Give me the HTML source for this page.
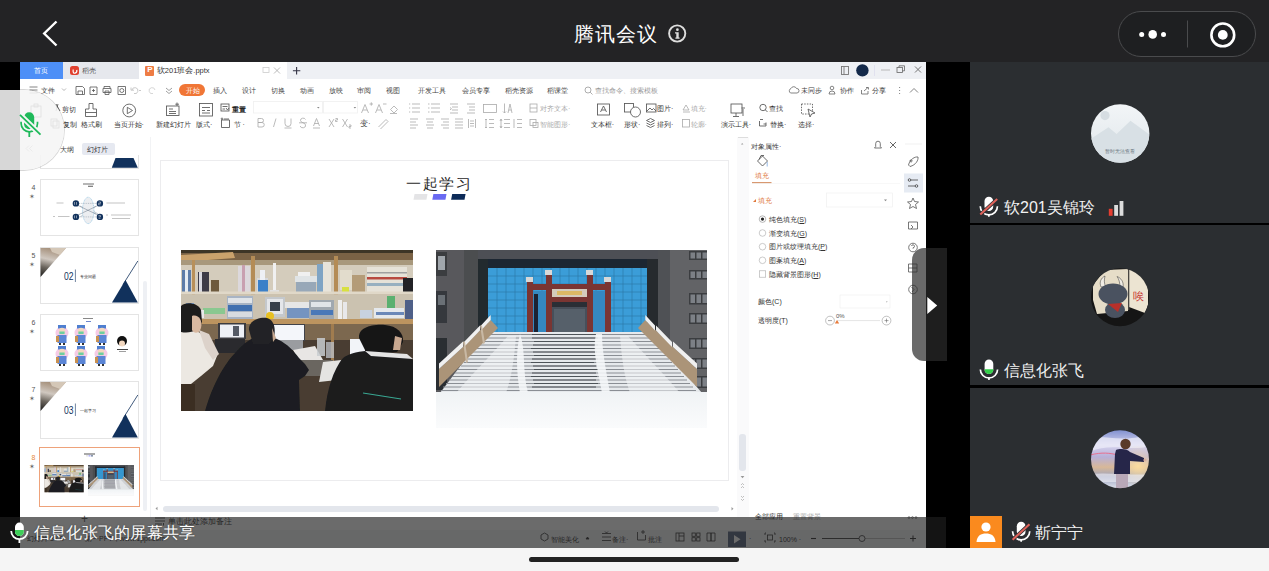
<!DOCTYPE html>
<html><head><meta charset="utf-8">
<style>
*{margin:0;padding:0;box-sizing:border-box}
html,body{width:1269px;height:571px;overflow:hidden;background:#f5f5f5;font-family:"Liberation Sans",sans-serif}
body{position:relative}
.a{position:absolute}
.t{position:absolute;white-space:nowrap;line-height:1}
svg{position:absolute;overflow:visible}
.tile{position:absolute;left:0;width:299px;background:#2b2e31}
</style></head><body>

<div class="a" style="left:0;top:0;width:1269px;height:62px;background:#232325"></div>
<svg style="left:0;top:0" width="1269" height="62">
  <polyline points="56.5,21.5 44.2,33.5 56.5,45.5" fill="none" stroke="#fff" stroke-width="2.4"/>
  <circle cx="677.2" cy="33.5" r="8.1" fill="none" stroke="#ddd" stroke-width="1.9"/>
  <circle cx="677.4" cy="29.7" r="1.35" fill="#ddd"/>
  <path d="M675,32.3 H678.7 V37.5 H679.6 V38.8 H675.4 V37.5 H676.3 V33.5 H675 Z" fill="#ddd"/>
  <rect x="1118.5" y="11.5" width="137" height="45" rx="22.5" fill="#1e1f21" stroke="#4a4b4d" stroke-width="1"/>
  <circle cx="1141.7" cy="34.4" r="2.5" fill="#fff"/>
  <circle cx="1152.7" cy="34.4" r="4.3" fill="#fff"/>
  <circle cx="1163.5" cy="34.4" r="2.5" fill="#fff"/>
  <line x1="1187.5" y1="20.5" x2="1187.5" y2="47.5" stroke="#4a4b4d" stroke-width="1"/>
  <circle cx="1222.8" cy="34.9" r="11.4" fill="none" stroke="#fff" stroke-width="2.6"/>
  <circle cx="1222.8" cy="34.9" r="4.9" fill="#fff"/>
</svg>
<div class="t" style="left:574px;top:24px;font-size:20px;color:#fff;letter-spacing:1.1px">腾讯会议</div>

<!-- ===== WPS window ===== -->
<div class="a" style="left:0;top:62px;width:20px;height:486px;background:#000"></div>
<div class="a" style="left:20px;top:62px;width:906px;height:486px;background:#fff"></div>
<div class="a" style="left:926px;top:62px;width:44px;height:486px;background:#000"></div>
<!-- tab bar -->
<div class="a" style="left:20px;top:62px;width:906px;height:17px;background:#eef0f4"></div>
<div class="a" style="left:20px;top:62px;width:43px;height:17px;background:#4d8ff7"></div>
<div class="t" style="left:33.8px;top:67.2px;font-size:7px;color:#fff">首页</div>
<div class="a" style="left:63px;top:62px;width:75.5px;height:17px;background:#e6e8ed"></div>
<div class="a" style="left:70.2px;top:66.2px;width:9px;height:9.3px;border-radius:2.5px;background:#e0402f"></div>
<svg style="left:70px;top:66px" width="10" height="10"><path d="M3.2,3.5 C2.8,6 3.5,7.5 5,7.2 C6.5,6.8 7,5 6.8,3.8" fill="none" stroke="#fff" stroke-width="1.2"/></svg>
<div class="t" style="left:81.5px;top:67.2px;font-size:7px;color:#555">稻壳</div>
<div class="a" style="left:138.5px;top:62px;width:148px;height:17px;background:#fff"></div>
<div class="a" style="left:145px;top:66px;width:9px;height:9.8px;border-radius:1px;background:#ee7c44"></div>
<div class="t" style="left:147.2px;top:66.3px;font-size:8px;color:#fff;font-weight:bold">P</div>
<div class="t" style="left:156.8px;top:67px;font-size:7.5px;color:#333">软201班会.pptx</div>
<svg style="left:262px;top:66px" width="30" height="10">
  <rect x="1" y="1.5" width="6" height="5" fill="none" stroke="#ccc" stroke-width="0.8"/>
  <path d="M12,1.5 L18,7.5 M18,1.5 L12,7.5" stroke="#aaa" stroke-width="0.8"/>
</svg>
<svg style="left:292px;top:66px" width="10" height="10"><path d="M4.6,1 V8.4 M0.9,4.7 H8.3" stroke="#334" stroke-width="1.1"/></svg>
<svg style="left:838px;top:64px" width="88" height="14">
  <rect x="3.5" y="2.5" width="7" height="8" fill="none" stroke="#777" stroke-width="0.9"/>
  <line x1="6" y1="2.5" x2="6" y2="10.5" stroke="#777" stroke-width="0.9"/>
  <circle cx="24.4" cy="6.4" r="6.2" fill="#13294a"/>
  <line x1="36.5" y1="1" x2="36.5" y2="12" stroke="#dde" stroke-width="0.8"/>
  <line x1="43" y1="6" x2="52" y2="6" stroke="#aaa" stroke-width="0.8"/>
  <rect x="59" y="3.5" width="5.5" height="5" fill="none" stroke="#666" stroke-width="0.8"/>
  <path d="M61,3.5 V1.8 H66.5 V6.8 H64.5" fill="none" stroke="#666" stroke-width="0.8"/>
  <path d="M77,2.5 L83,8.5 M83,2.5 L77,8.5" stroke="#666" stroke-width="0.9"/>
</svg>
<!-- menu row -->
<svg style="left:28px;top:85px" width="150" height="11">
  <path d="M1.5,2 H9.5 M1.5,5 H9.5 M1.5,8 H9.5" stroke="#666" stroke-width="0.8"/>
  <path d="M34,3.5 L36,5.5 L38,3.5" fill="none" stroke="#999" stroke-width="0.7"/>
  <path d="M48,1.5 H54.5 L56.5,3.5 V9.5 H48 Z M50,9.5 V6 H54.5 V9.5" fill="none" stroke="#555" stroke-width="0.8"/>
  <path d="M62,2 H69 V9.5 H62 Z M64,5.5 H67 M65.5,4 V7" fill="none" stroke="#555" stroke-width="0.8"/>
  <path d="M76,3 V1.5 H82 V3 M75,3.5 H83 V7.5 H75 Z M77,6 H81 V9.5 H77 Z" fill="none" stroke="#555" stroke-width="0.8"/>
  <path d="M90,1.5 H97.5 V9.5 H90 Z" fill="none" stroke="#555" stroke-width="0.8"/>
  <circle cx="93.8" cy="5.5" r="2" fill="none" stroke="#555" stroke-width="0.8"/>
  <path d="M104,5 A3,3 0 1 1 106,8.5" fill="none" stroke="#bbb" stroke-width="0.8"/>
  <path d="M103,2.5 V5.2 H106" fill="none" stroke="#bbb" stroke-width="0.8"/>
  <line x1="111" y1="5.5" x2="113" y2="5.5" stroke="#bbb" stroke-width="0.8"/>
  <path d="M127,5 A3,3 0 1 0 125,8.5" fill="none" stroke="#ccc" stroke-width="0.8"/>
  <path d="M138,3 L141,5.5 L144,3 M138,6 L141,8.5 L144,6" fill="none" stroke="#777" stroke-width="0.7"/>
</svg>
<div class="t" style="left:41px;top:87px;font-size:7px;color:#444">文件</div>
<div class="a" style="left:179px;top:84.2px;width:26px;height:11.8px;border-radius:6px;background:#f07636"></div>
<div class="t" style="left:185.8px;top:87px;font-size:7px;color:#fff">开始</div>
<div class="t" style="left:213.3px;top:87.3px;font-size:7px;color:#444">插入</div>
<div class="t" style="left:242px;top:87.3px;font-size:7px;color:#444">设计</div>
<div class="t" style="left:271px;top:87.3px;font-size:7px;color:#444">切换</div>
<div class="t" style="left:299.6px;top:87.3px;font-size:7px;color:#444">动画</div>
<div class="t" style="left:329px;top:87.3px;font-size:7px;color:#444">放映</div>
<div class="t" style="left:357px;top:87.3px;font-size:7px;color:#444">审阅</div>
<div class="t" style="left:386px;top:87.3px;font-size:7px;color:#444">视图</div>
<div class="t" style="left:418px;top:87.3px;font-size:7px;color:#444">开发工具</div>
<div class="t" style="left:461.7px;top:87.3px;font-size:7px;color:#444">会员专享</div>
<div class="t" style="left:504.5px;top:87.3px;font-size:7px;color:#444">稻壳资源</div>
<div class="t" style="left:547px;top:87.3px;font-size:7px;color:#444">稻课堂</div>
<svg style="left:584px;top:86px" width="10" height="10"><circle cx="4" cy="4" r="3" fill="none" stroke="#999" stroke-width="0.8"/><line x1="6.2" y1="6.2" x2="8.5" y2="8.5" stroke="#999" stroke-width="0.8"/></svg>
<div class="t" style="left:595px;top:87.3px;font-size:7px;color:#999">查找命令、搜索模板</div>
<svg style="left:788px;top:85px" width="135" height="11">
  <path d="M2.5,8 A2.5,2.5 0 0 1 3,3.5 A3,3 0 0 1 8.5,3.5 A2.2,2.2 0 0 1 9,8 Z" fill="none" stroke="#666" stroke-width="0.8"/>
  <circle cx="44" cy="3" r="1.8" fill="none" stroke="#666" stroke-width="0.8"/>
  <path d="M41,9 A3,3 0 0 1 47,9 Z" fill="none" stroke="#666" stroke-width="0.8"/>
  <path d="M73.5,5 V9 H80 V6 M76,6 L80,2.5 M78,2.5 H80.5 V4.5" fill="none" stroke="#666" stroke-width="0.8"/>
  <circle cx="111.6" cy="2.5" r="0.6" fill="#777"/><circle cx="111.6" cy="5.5" r="0.6" fill="#777"/><circle cx="111.6" cy="8.5" r="0.6" fill="#777"/>
  <path d="M122,7.5 L126,3.5 L130,7.5" fill="none" stroke="#666" stroke-width="0.8"/>
</svg>
<div class="t" style="left:801px;top:87.3px;font-size:7px;color:#444">未同步</div>
<div class="t" style="left:840px;top:87.3px;font-size:7px;color:#444">协作</div>
<div class="t" style="left:872px;top:87.3px;font-size:7px;color:#444">分享</div>
<!-- ribbon -->
<svg style="left:0;top:0" width="926" height="140">
 <g fill="none" stroke="#555" stroke-width="0.85">
  <!-- paste -->
  <rect x="31" y="106" width="10" height="11" />
  <rect x="34" y="104" width="4" height="3" />
  <!-- cut -->
  <path d="M56,104 L60,111 M58,104 L56,111"/>
  <!-- copy -->
  <rect x="51" y="119" width="6" height="7"/><rect x="53" y="121" width="6" height="7"/>
  <!-- brush -->
  <path d="M89,103.5 H93 V109 H96.5 V116.5 H85.5 V109 H89 Z M85.5,112.5 H96.5"/>
  <!-- play -->
  <circle cx="129.2" cy="110.5" r="6.4"/>
  <path d="M127.3,107.3 L132.5,110.5 L127.3,113.7 Z"/>
  <!-- new slide -->
  <rect x="166.5" y="106" width="12.5" height="9.5"/>
  <path d="M169,109 H173 M169,111.5 H176 M169,113.5 H176 M177,102.5 V106 M175.3,104.2 H179"/>
  <!-- layout -->
  <rect x="199.5" y="103.5" width="13" height="12.5"/>
  <path d="M202,107.5 H210 M202,110.5 H205 M207,110.5 H210 M202,113 H210"/>
  <!-- reset -->
  <rect x="221" y="104" width="8" height="7"/><path d="M222.5,106.5 H227.5 M222.5,109 H225 M226,108 l1.5,2 l1.5,-2"/>
  <!-- section -->
  <path d="M221.5,120 V127.5 H229.5 V120 Z M224,119 H229" /><circle cx="222" cy="118.8" r="0.8"/>
  <!-- font boxes -->
  <rect x="253.5" y="101.5" width="69" height="11.5" stroke="#f0f0f0"/>
  <rect x="323.5" y="101.5" width="34" height="11.5" stroke="#f0f0f0"/>
 </g>
 <g fill="#888">
  <path d="M317,107 h2.6 l-1.3,1.5z M353.6,107 h2.6 l-1.3,1.5z"/>
 </g>
 <g fill="none" stroke="#aaa" stroke-width="0.8">
  <!-- A+ A- eraser -->
  <path d="M361.5,113 L365,104.5 L368.5,113 M363,110 H367 M369.5,104 H373 M371.3,102.3 V105.7"/>
  <path d="M375.5,113 L379,104.5 L382.5,113 M377,110 H381 M383,104 H386.5"/>
  <path d="M390.5,109.5 L394,106 L397.5,109.5 L394,113 Z M390,113.5 H397"/>
  <!-- bold italic etc -->
  <path d="M258,118.5 H261.5 A2,2 0 0 1 261.5,122.5 H258 Z M258,122.5 H262 A2.2,2.2 0 0 1 262,127 H258 Z"/>
  <path d="M276,118.5 L273.5,127"/>
  <path d="M285,118.5 V123.5 A3,3 0 0 0 291,123.5 V118.5 M284.5,128 H291.5"/>
  <path d="M305.5,119.5 A2.6,2.2 0 0 0 300.5,120.5 C300.5,123 305.5,122.5 305.5,125 A2.6,2.2 0 0 1 300.2,126 M299,122.8 H307"/>
  <path d="M313.5,126 L316.5,118.5 L319.5,126 M314.5,123.5 H318.5 M313,128 H320"/>
  <path d="M329,119 L334,127 M334,119 L329,127 M335.5,118.5 h2 v1.5 h-2 v1.5 h2"/>
  <path d="M342.5,119 L347.5,127 M347.5,119 L342.5,127 M349,125 h2 v1.5 h-2 v1.5 h2"/>
  <path d="M378.5,127 L386,119.5 L388,121.5 L380.5,129"/>
  <!-- lists -->
  <path d="M409,104 h1.2 M409,108 h1.2 M409,112 h1.2 M412,104 H420 M412,108 H420 M412,112 H420"/>
  <path d="M428,104 h1.5 M428,108 h1.5 M428,112 h1.5 M431,104 H440 M431,108 H440 M431,112 H440"/>
  <path d="M450,104 H458 M452,107 H458 M452,110 H458 M450,113 H458 M450,107.5 l1.5,1.2 l-1.5,1.2"/>
  <path d="M467,104 H475 M469,107 H475 M469,110 H475 M467,113 H475"/>
  <rect x="483.5" y="104.5" width="13" height="8"/>
  <path d="M504.5,103.5 V113 M503,111.5 L504.5,113 L506,111.5 M508,113 L510,104 L512,113 M508.7,110 H511.3"/>
  <!-- align -->
  <path d="M410,119 H418 M410,122 H416 M410,125 H418 M410,128 H416"/>
  <path d="M426,119 H434 M427,122 H433 M426,125 H434 M427,128 H433"/>
  <path d="M441,119 H449 M443,122 H449 M441,125 H449 M443,128 H449"/>
  <path d="M455,119 H463 M455,122 H463 M455,125 H463 M455,128 H463"/>
  <path d="M468.5,119 V128 M475.5,119 V128 M470,121 H474 M470,123.5 H474 M470,126 H474"/>
  <path d="M486,119 V128 M485,120 L486,119 L487,120 M485,127 L486,128 L487,127 M489,119.5 H494 M489,123.5 H494 M489,127.5 H494"/>
  <path d="M501,119 V128 M500,121 L501,119 L502,121 M500,126 L501,128 L502,126 M504,119.5 H510 M504,123.5 H510 M504,127.5 H510"/>
  <path d="M514,119 V128 M517,119.5 H522 M517,123.5 H522 M517,127.5 H522"/>
  <rect x="530" y="104" width="7" height="8"/><path d="M530,108 H537"/>
  <rect x="530" y="119.5" width="6" height="6"/><rect x="533" y="122.5" width="5" height="5"/>
  <!-- fill / outline -->
  <path d="M683,110 L686,105 L689,110 Z M683,112 H690"/>
  <rect x="682.5" y="119.5" width="7" height="7.5"/>
 </g>
 <g fill="none" stroke="#555" stroke-width="0.85">
  <!-- textbox -->
  <rect x="597.5" y="104" width="12" height="11"/>
  <path d="M600.5,112 L603.5,106 L606.5,112 M601.5,110 H605.5"/>
  <!-- shapes -->
  <rect x="624.5" y="103.5" width="9" height="8.5"/><circle cx="635.5" cy="112" r="5" fill="#fff"/>
  <!-- picture -->
  <rect x="646.5" y="104" width="9.5" height="8"/><path d="M647,111 L650,108 L652,110 L653.5,108.5 L656,111"/>
  <!-- arrange -->
  <path d="M646.5,120.5 L650.5,118.5 L654.5,120.5 L650.5,122.5 Z M646.5,123 L650.5,125 L654.5,123 M646.5,125.5 L650.5,127.5 L654.5,125.5"/>
  <!-- presenter tools -->
  <rect x="731" y="104" width="11" height="9"/><path d="M736,113 V116 M733,116.5 H739 M743,109 V116 M741.5,108 H745"/>
  <!-- find -->
  <circle cx="763" cy="107.5" r="3.2"/><path d="M765.3,109.8 L767.5,112"/>
  <!-- replace -->
  <path d="M760,119.5 H763 M759.5,121 V126 H766 V122.5 M763.5,124 h2.5"/>
  <!-- select -->
  <rect x="801.5" y="104" width="11" height="10" stroke-dasharray="1.5,1.2"/>
  <path d="M808,109 L815,113 L811.5,114 L810,117 Z" fill="#fff"/>
 </g>
</svg>
<div class="t" style="left:61.8px;top:106px;font-size:7px;color:#333">剪切</div>
<div class="t" style="left:63px;top:120.6px;font-size:7px;color:#333">复制</div>
<div class="t" style="left:81px;top:120.6px;font-size:7px;color:#333">格式刷</div>
<div class="t" style="left:113.5px;top:120.6px;font-size:7px;color:#333">当页开始·</div>
<div class="t" style="left:156px;top:120.6px;font-size:7px;color:#333">新建幻灯片</div>
<div class="t" style="left:196px;top:120.6px;font-size:7px;color:#333">版式·</div>
<div class="t" style="left:232px;top:105.5px;font-size:7px;color:#222;font-weight:bold">重置</div>
<div class="t" style="left:233.5px;top:120.6px;font-size:7px;color:#333">节 ·</div>
<div class="t" style="left:360px;top:120.2px;font-size:8px;color:#444">变·</div>
<div class="t" style="left:540px;top:105.3px;font-size:7px;color:#aaa">对齐文本·</div>
<div class="t" style="left:540px;top:120.6px;font-size:7px;color:#aaa">智能图形·</div>
<div class="t" style="left:590.7px;top:120.6px;font-size:7px;color:#333">文本框·</div>
<div class="t" style="left:624px;top:120.6px;font-size:7px;color:#333">形状·</div>
<div class="t" style="left:657px;top:105.3px;font-size:7px;color:#333">图片·</div>
<div class="t" style="left:657px;top:120.6px;font-size:7px;color:#333">排列·</div>
<div class="t" style="left:690.5px;top:105.3px;font-size:7px;color:#aaa">填充·</div>
<div class="t" style="left:690.5px;top:120.6px;font-size:7px;color:#aaa">轮廓·</div>
<div class="t" style="left:720.7px;top:120.6px;font-size:7px;color:#333">演示工具·</div>
<div class="t" style="left:769px;top:105.3px;font-size:7px;color:#333">查找</div>
<div class="t" style="left:770px;top:120.6px;font-size:7px;color:#333">替换·</div>
<div class="t" style="left:798px;top:120.6px;font-size:7px;color:#333">选择·</div>

<!-- ===== slide panel ===== -->
<div class="a" style="left:150px;top:137px;width:1px;height:380px;background:#f2f3f5"></div>
<div class="a" style="left:143.2px;top:281px;width:3.6px;height:230px;background:#eef0f4;border-radius:2px"></div>
<svg style="left:24px;top:144px" width="10" height="9"><path d="M5,1.5 L2,4.5 L5,7.5 M8.5,1.5 L5.5,4.5 L8.5,7.5" fill="none" stroke="#888" stroke-width="0.8"/></svg>
<div class="t" style="left:60.4px;top:145.9px;font-size:7px;color:#444">大纲</div>
<div class="a" style="left:81.8px;top:143px;width:32.8px;height:11.7px;border-radius:2px;background:#e6e9f1"></div>
<div class="t" style="left:87.3px;top:145.9px;font-size:7px;color:#333">幻灯片</div>
<!-- thumb 3 (clipped) -->
<div class="a" style="left:39.5px;top:155px;width:99px;height:13.5px;background:#fff;border:1px solid #e4e4e4;border-top:none"></div>
<svg style="left:0;top:0" width="150" height="520">
  <path d="M115.5,158 H133.5 L137.8,167.8 H111.8 Z" fill="#11315c"/>
</svg>
<!-- thumb 4 -->
<div class="a" style="left:39.5px;top:179px;width:99px;height:57px;background:#fff;border:1px solid #e4e4e4"></div>
<div class="t" style="left:31.5px;top:183.5px;font-size:7px;color:#555">4</div>
<div class="t" style="left:28.5px;top:193px;font-size:7px;color:#666">✶</div>
<svg style="left:0;top:0" width="150" height="520">
  <rect x="83" y="183.3" width="11" height="1.4" fill="#999"/>
  <rect x="88" y="185.8" width="5" height="0.8" fill="#333"/>
  <path d="M80,206 L96,214 M84,205 L98,214 M80,217 L96,206" stroke="#7a8a9a" stroke-width="0.45"/>
  <ellipse cx="88.2" cy="210.4" rx="5.75" ry="13.2" fill="#eceef1" stroke="#6ab0d8" stroke-width="0.5" stroke-dasharray="1,0.6"/>
  <path d="M79,203.4 H97 M79,216.9 H97" stroke="#6a7a8a" stroke-width="0.4" stroke-dasharray="1,0.8"/>
  <path d="M77,205 L99,215.5 M99,205 L77,215.5" stroke="#5a6a7a" stroke-width="0.45"/>
  <circle cx="75.9" cy="203.4" r="3.2" fill="#11315c"/><circle cx="99.9" cy="203.4" r="3.2" fill="#11315c"/>
  <circle cx="75.9" cy="216.9" r="3.2" fill="#11315c"/><circle cx="99.9" cy="216.9" r="3.2" fill="#11315c"/>
  <path d="M74.5,202 v2.8 M76.5,202 v2.8 M98.5,202 h2 v1.4 h-2 v1.4 h2 M74.5,215.5 v2.8 M76.5,215.5 v2.8 M98.5,215.5 h2 v1.4 h-2 M98.5,218.3 h2" stroke="#fff" stroke-width="0.45" fill="none"/>
  <path d="M56.5,203 H63.5 M53,216.5 H55 M58,216.5 H69.5 M106.4,203 H125 M106,215 H108 M111,215 H131 M112,218.5 H130" stroke="#aaa" stroke-width="0.7"/>
</svg>
<!-- thumb 5 -->
<div class="a" style="left:39.5px;top:247px;width:99px;height:56.5px;background:#fff;border:1px solid #e4e4e4"></div>
<div class="t" style="left:31.5px;top:251.5px;font-size:7px;color:#555">5</div>
<div class="t" style="left:28.5px;top:261px;font-size:7px;color:#666">✶</div>
<svg style="left:0;top:0" width="150" height="520">
  <defs>
    <linearGradient id="tg1" x1="0.2" y1="0" x2="0" y2="1"><stop offset="0" stop-color="#a89480"/><stop offset="0.35" stop-color="#d0c8c0"/><stop offset="0.65" stop-color="#6a645c"/><stop offset="1" stop-color="#1c1c1c"/></linearGradient>
  </defs>
  <path d="M40.5,248 H66 L40.5,277 Z" fill="url(#tg1)"/>
  <path d="M50,248 H66 L60,255 L52,252 Z" fill="#d8ccbc" opacity="0.9"/>
  <text x="64" y="280.3" font-size="10.5" fill="#11315c" font-family="Liberation Sans" textLength="9.5" lengthAdjust="spacingAndGlyphs">02</text>
  <line x1="75.4" y1="269.5" x2="75.4" y2="282" stroke="#11315c" stroke-width="0.6"/>
  <text x="79.5" y="277.5" font-size="3.8" fill="#222">专业问题</text>
  <path d="M112,302.5 L125.5,280 L137.8,302.5 Z" fill="#11315c"/>
  <line x1="123" y1="284.5" x2="137.8" y2="261" stroke="#11315c" stroke-width="0.8"/>
</svg>
<!-- thumb 6 -->
<div class="a" style="left:39.5px;top:314px;width:99px;height:56.5px;background:#fff;border:1px solid #e4e4e4"></div>
<div class="t" style="left:31.5px;top:318.5px;font-size:7px;color:#555">6</div>
<div class="t" style="left:28.5px;top:328px;font-size:7px;color:#666">✶</div>
<svg style="left:0;top:0" width="150" height="520">
  <rect x="83" y="318" width="10" height="1" fill="#888"/>
  <rect x="86" y="321" width="5" height="0.8" fill="#4a68c0"/>
  <defs><g id="cf">
    <circle cx="0" cy="1" r="6.5" fill="#f6cbe6"/>
    <rect x="-4" y="-7" width="8" height="3.5" fill="#4f7fd0"/>
    <circle cx="0" cy="-1" r="3.2" fill="#f3d8c0"/>
    <rect x="-2.6" y="-0.5" width="5.2" height="2.6" fill="#6ecfa0"/>
    <rect x="-4.5" y="3" width="9" height="8" fill="#5c86d6"/>
    <rect x="-6" y="4" width="3" height="6" fill="#c89050"/>
    <rect x="-3" y="11" width="2" height="2" fill="#333"/><rect x="1" y="11" width="2" height="2" fill="#333"/>
  </g></defs>
  <use href="#cf" x="62" y="332"/><use href="#cf" x="81" y="332"/><use href="#cf" x="102" y="332"/>
  <use href="#cf" x="62" y="353"/><use href="#cf" x="81" y="353"/><use href="#cf" x="101" y="353"/>
  <circle cx="122" cy="341" r="5" fill="#111"/><circle cx="122" cy="343.5" r="3" fill="#f3d8c0"/>
  <rect x="117" y="349" width="11" height="1" fill="#444"/><rect x="119" y="351" width="7" height="0.8" fill="#888"/>
</svg>
<!-- thumb 7 -->
<div class="a" style="left:39.5px;top:381px;width:99px;height:57.5px;background:#fff;border:1px solid #e4e4e4"></div>
<div class="t" style="left:31.5px;top:385.5px;font-size:7px;color:#555">7</div>
<div class="t" style="left:28.5px;top:395px;font-size:7px;color:#666">✶</div>
<svg style="left:0;top:0" width="150" height="520">
  <path d="M40.5,382 H66 L40.5,411 Z" fill="url(#tg1)"/>
  <path d="M50,382 H66 L60,389 L52,386 Z" fill="#d8ccbc" opacity="0.9"/>
  <text x="64" y="414.3" font-size="10.5" fill="#11315c" font-family="Liberation Sans" textLength="9.5" lengthAdjust="spacingAndGlyphs">03</text>
  <line x1="75.4" y1="403.5" x2="75.4" y2="416" stroke="#11315c" stroke-width="0.6"/>
  <text x="79.5" y="411.5" font-size="3.8" fill="#222">一起学习</text>
  <path d="M112,437.5 L125.5,414 L137.8,437.5 Z" fill="#11315c"/>
  <line x1="123" y1="418.5" x2="137.8" y2="395" stroke="#11315c" stroke-width="0.8"/>
</svg>
<!-- thumb 8 selected -->
<div class="a" style="left:38.5px;top:447px;width:101.5px;height:60px;background:#fff;border:1.6px solid #eea27a"></div>
<div class="t" style="left:31.5px;top:453.5px;font-size:7px;color:#e58a3e">8</div>
<div class="t" style="left:28.5px;top:463px;font-size:7px;color:#666">✶</div>
<svg style="left:0;top:0" width="150" height="520">
  <rect x="84" y="453.5" width="11" height="1" fill="#555"/>
  <rect x="86" y="455.5" width="2" height="0.8" fill="#ccc"/><rect x="88.5" y="455.5" width="2" height="0.8" fill="#6b6bf5"/><rect x="91" y="455.5" width="2" height="0.8" fill="#11315c"/>
  <g transform="translate(44.3,465) scale(0.1703)"><use href="#p1g"/></g>
  <g transform="translate(88,465) scale(0.1697)"><use href="#p2g"/></g>
</svg>
<div class="t" style="left:81px;top:513px;font-size:12px;color:#555">+</div>

<!-- ===== slide canvas ===== -->
<div class="a" style="left:160px;top:160px;width:568.5px;height:321px;background:#fff;border:1px solid #ececee"></div>
<div class="t" style="left:406px;top:176.5px;font-size:14.6px;color:#2a2a2a;letter-spacing:1.6px;font-weight:300">一起学习</div>
<svg style="left:0;top:0" width="740" height="500">
  <path d="M414.6,194 H427.5 L426.4,199.7 H413.5 Z" fill="#e4e4e6"/>
  <path d="M433.4,194 H446.5 L445.4,199.7 H432.3 Z" fill="#6a6af2"/>
  <path d="M452.2,194 H465.6 L464.5,199.7 H451.1 Z" fill="#0d2b58"/>
</svg>
<!-- photo 1 -->
<svg style="left:181px;top:249.5px" width="232" height="161" viewBox="0 0 232 161">
  <defs><filter id="bl1" x="-5%" y="-5%" width="110%" height="110%"><feGaussianBlur stdDeviation="0.7"/></filter>
  <clipPath id="cp1"><rect width="232" height="161"/></clipPath></defs>
  <g clip-path="url(#cp1)" id="p1g"><g filter="url(#bl1)">
  <rect width="232" height="161" fill="#b9ad96"/>
  <!-- top -->
  <rect x="0" y="0" width="232" height="10" fill="#7a6244"/>
  <rect x="0" y="0" width="232" height="3" fill="#3c3428"/>
  <path d="M0,5 L52,2 L54,8 L0,12 Z" fill="#caa26c"/>
  <!-- upper wall -->
  <rect x="0" y="10" width="232" height="32" fill="#d4ccbc"/>
  <rect x="0" y="10" width="232" height="5" fill="#a8987c"/>
  <!-- posts -->
  <rect x="11" y="10" width="3" height="64" fill="#b8905a"/>
  <rect x="70" y="6" width="4" height="68" fill="#b48c56"/>
  <rect x="153" y="6" width="4" height="68" fill="#b48c56"/>
  <!-- books upper -->
  <rect x="1" y="20" width="9" height="22" fill="#5d7ca8"/><rect x="4" y="20" width="3" height="22" fill="#e6ecf2"/>
  <rect x="17" y="22" width="11" height="20" fill="#3c3a46"/><rect x="18" y="22" width="3" height="20" fill="#d8d8e0"/>
  <rect x="30" y="30" width="8" height="12" fill="#6e5a3e"/>
  <rect x="57" y="16" width="12" height="26" fill="#dcd8dc"/><rect x="61" y="15" width="3" height="27" fill="#c8a0b0"/>
  <rect x="76" y="28" width="11" height="14" fill="#d6d8dc"/><rect x="77" y="30" width="10" height="12" fill="#3a80c8"/>
  <rect x="79" y="20" width="5" height="10" fill="#eef0f4"/>
  <rect x="92" y="13" width="3" height="29" fill="#f0f0f0"/><rect x="89" y="40" width="9" height="2" fill="#e0e0e0"/>
  <rect x="115" y="32" width="20" height="10" fill="#98a8b8"/><rect x="114" y="26" width="22" height="6" fill="#e0e4e6"/><rect x="117" y="22" width="12" height="4" fill="#f0f0f0"/>
  <rect x="136" y="14" width="6" height="28" fill="#7fa4c4"/><rect x="142" y="12" width="8" height="30" fill="#e8e4da"/>
  <rect x="159" y="20" width="12" height="20" fill="#e2dccc"/><rect x="161" y="37" width="7" height="5" fill="#d8e040"/>
  <rect x="171" y="25" width="13" height="17" fill="#b49c78"/>
  <rect x="186" y="17" width="40" height="25" fill="#e6e2d8"/><rect x="186" y="27" width="40" height="2.5" fill="#b84a40"/><rect x="186" y="33" width="40" height="3" fill="#98b0c0"/><rect x="186" y="22" width="40" height="1.5" fill="#a0a0a0"/>
  <rect x="222" y="28" width="10" height="14" fill="#222428"/>
  <!-- shelf board 2 -->
  <rect x="0" y="41.5" width="232" height="3" fill="#e0d8c8"/>
  <!-- middle compartment -->
  <rect x="0" y="44.5" width="232" height="25" fill="#cbc2b0"/>
  <rect x="5" y="53" width="8" height="14" fill="#7aa0d0"/>
  <rect x="22" y="58" width="22" height="6" fill="#8ac890"/><rect x="15" y="60" width="8" height="8" fill="#e8e8ea"/>
  <rect x="46" y="46" width="26" height="24" fill="#a8b4c4"/><rect x="47" y="48" width="24" height="5" fill="#e0e4e8"/><rect x="47" y="55" width="24" height="6" fill="#4070b0"/><rect x="47" y="62" width="24" height="5" fill="#d8dce0"/>
  <rect x="84" y="47" width="20" height="20" fill="#c4c8cc"/><rect x="86" y="49" width="16" height="15" fill="#e4e6ea"/><rect x="89" y="52" width="10" height="9" fill="#38404c"/>
  <circle cx="89" cy="66" r="4" fill="#e8c020"/>
  <rect x="106" y="58" width="24" height="10" fill="#7494c0"/><rect x="104" y="52" width="26" height="6" fill="#e6e6e6"/>
  <rect x="128" y="50" width="25" height="20" fill="#a0a8b0"/><rect x="130" y="52" width="20" height="5" fill="#e0e4e8"/><rect x="130" y="60" width="22" height="5" fill="#4a78b8"/>
  <rect x="157" y="50" width="4" height="20" fill="#eeeeee"/><rect x="162" y="52" width="4" height="18" fill="#e8e8ea"/>
  <rect x="179" y="60" width="12" height="8" fill="#c8d2e0"/><rect x="193" y="58" width="30" height="10" fill="#e4e8ec"/><rect x="195" y="62" width="28" height="3" fill="#6a88b8"/>
  <rect x="206" y="46" width="8" height="12" fill="#5ab070"/>
  <rect x="224" y="50" width="8" height="20" fill="#506088"/>
  <!-- shelf board 3 -->
  <rect x="0" y="69" width="232" height="5" fill="#bc945e"/>
  <rect x="0" y="74" width="232" height="87" fill="#4a3e32"/>
  <rect x="0" y="74" width="232" height="16" fill="#7c6850"/>
  <rect x="150" y="74" width="3" height="87" fill="#a07c50"/>
  <!-- screens -->
  <rect x="37" y="73" width="28" height="16" fill="#3a3a40"/>
  <rect x="39" y="74.5" width="24" height="13" fill="#eef0f6"/><rect x="52" y="76" width="6" height="10" fill="#555a66"/>
  <rect x="92" y="74" width="32" height="17" fill="#40424a"/>
  <rect x="93" y="75" width="30" height="15" fill="#f4f6fa"/>
  <rect x="169" y="89" width="15" height="20" fill="#f2f4f8"/>
  <rect x="34" y="89" width="30" height="14" fill="#2a2a2e"/>
  <rect x="86" y="90" width="36" height="10" fill="#9a9ca0"/>
  <!-- desk / papers -->
  <path d="M112,100 L134,96 L142,110 L120,114 Z" fill="#e8e6e4"/>
  <rect x="136" y="88" width="8" height="18" fill="#c8ccd0" opacity="0.85"/>
  <rect x="145" y="92" width="8" height="16" fill="#b8bcc0" opacity="0.8"/>
  <rect x="120" y="110" width="32" height="16" fill="#6a6660"/>
  <path d="M142,112 L160,110 L156,130 L138,132 Z" fill="#e4e4e2"/>
  <!-- left person -->
  <path d="M0,82 C8,79 18,80 22,86 L28,96 L36,106 L32,116 L20,126 L10,134 L6,161 H0 Z" fill="#ece8e2"/>
  <path d="M0,56 C4,52 16,52 20,60 L21,72 C19,80 10,84 0,82 Z" fill="#1e1c1c"/>
  <path d="M11,66 C17,64 22,70 20,78 C18,84 13,84 11,80 Z" fill="#d8b8a0"/>
  <path d="M18,80 L28,84 L38,104 L32,110 L24,98 Z" fill="#dcd2ca"/>
  <rect x="0" y="134" width="14" height="27" fill="#3a2e22"/>
  <!-- middle person -->
  <path d="M72,88 C80,85 92,86 98,90 C106,94 112,100 118,108 L124,114 L128,120 L124,126 L118,130 L119,161 H24 C28,146 36,126 48,110 C56,100 64,92 72,88 Z" fill="#1c1e21"/>
  <path d="M68,80 C67,72 76,67 86,68 C93,70 95,78 93,88 L88,94 L72,94 Z" fill="#232326"/>
  <path d="M91,78 L95,88 L92,92 Z" fill="#c8a890"/>
  <!-- right person -->
  <path d="M162,108 C170,102 184,100 196,101 L222,104 L232,110 V161 H144 C146,140 152,120 162,108 Z" fill="#1a1b1f"/>
  <path d="M178,88 C177,78 190,74 204,75 C216,76 223,83 222,92 L216,102 L186,104 Z" fill="#141416"/>
  <path d="M214,86 L221,88 L219,100 L212,100 Z" fill="#c8a890"/>
  <path d="M184,101 L226,104 L232,109 L190,106 Z" fill="#e4e4e4"/>
  <path d="M182,143 L220,149" stroke="#3aa890" stroke-width="1.1"/>
  </g></g>
</svg>
<!-- photo 2 -->
<svg style="left:436px;top:250px" width="271" height="178" viewBox="0 0 271 178">
  <defs><filter id="bl2" x="-5%" y="-5%" width="110%" height="110%"><feGaussianBlur stdDeviation="0.55"/></filter>
  <clipPath id="cp2"><rect width="271" height="178"/></clipPath>
  <linearGradient id="snow" x1="0" y1="0" x2="0" y2="1"><stop offset="0" stop-color="#f0f3f5"/><stop offset="1" stop-color="#fafbfc"/></linearGradient>
  </defs>
  <g clip-path="url(#cp2)" id="p2g"><g filter="url(#bl2)">
  <rect width="271" height="178" fill="#5e5f62"/>
  <!-- left building -->
  <rect x="0" y="0" width="42" height="145" fill="#58595c"/>
  <rect x="0" y="2" width="11" height="24" fill="#3a3c40"/><rect x="2" y="6" width="7" height="14" fill="#a0a6ac"/>
  <rect x="0" y="41" width="11" height="32" fill="#36383c"/><rect x="2" y="45" width="7" height="10" fill="#6a7076"/>
  <rect x="0" y="88" width="11" height="52" fill="#2c2e32"/>
  <rect x="28" y="0" width="14" height="145" fill="#4c4d50"/>
  <!-- top band and dark frame -->
  <rect x="42" y="0" width="180" height="9" fill="#4e5054"/>
  <rect x="42" y="9" width="180" height="9" fill="#1e2832"/>
  <rect x="42" y="9" width="10" height="74" fill="#23292f"/>
  <rect x="211" y="9" width="11" height="74" fill="#25292d"/>
  <!-- glass -->
  <rect x="52" y="18" width="159" height="65" fill="#3a9dd8"/>
  <g stroke="#2a76a6" stroke-width="0.6">
    <path d="M61,18 V82 M70,18 V82 M79,18 V82 M88,18 V82 M97,18 V82 M106,18 V82 M115,18 V82 M124,18 V82 M133,18 V82 M142,18 V82 M151,18 V82 M160,18 V82 M169,18 V82 M178,18 V82 M187,18 V82 M196,18 V82 M205,18 V82"/>
    <path d="M52,26 H211 M52,34 H211 M52,42 H211 M52,50 H211 M52,58 H211 M52,66 H211 M52,74 H211"/>
  </g>
  <!-- gate -->
  <rect x="91" y="31" width="6" height="52" fill="#7a3430"/>
  <rect x="110" y="24" width="6" height="59" fill="#7a3430"/>
  <rect x="151" y="24" width="6" height="59" fill="#7a3430"/>
  <rect x="169" y="31" width="6" height="52" fill="#7a3430"/>
  <rect x="90" y="27" width="7" height="5" fill="#d8d8d8"/><rect x="109" y="20" width="7" height="5" fill="#d8d8d8"/>
  <rect x="150" y="20" width="7" height="5" fill="#d8d8d8"/><rect x="168" y="27" width="7" height="5" fill="#d8d8d8"/>
  <rect x="91" y="34" width="84" height="6" fill="#7a3430"/>
  <rect x="116" y="39" width="35" height="8" fill="#d4ccbc"/>
  <rect x="121" y="41" width="25" height="4" fill="#e0b040" opacity="0.7"/>
  <rect x="116" y="47" width="35" height="5" fill="#7a3430"/>
  <rect x="116" y="52" width="35" height="5" fill="#2a2e34"/>
  <rect x="116" y="57" width="35" height="26" fill="#46505a"/>
  <rect x="118" y="59" width="31" height="24" fill="#56606a"/>
  <rect x="97" y="41" width="13" height="42" fill="#3488c0"/><rect x="98" y="44" width="4" height="39" fill="#1a2430"/>
  <rect x="157" y="41" width="12" height="42" fill="#3488c0"/>
  <!-- right building -->
  <rect x="222" y="0" width="49" height="145" fill="#626366"/>
  <rect x="222" y="0" width="12" height="145" fill="#505154"/>
  <rect x="253" y="1" width="18" height="9" fill="#3a3c40"/><rect x="254.5" y="2.5" width="4.5" height="6" fill="#7c8086"/><rect x="260.5" y="2.5" width="4.5" height="6" fill="#7c8086"/><rect x="266.5" y="2.5" width="4.5" height="6" fill="#7c8086"/>
  <rect x="253" y="20" width="18" height="9.5" fill="#3a3c40"/><rect x="254.5" y="21.5" width="4.5" height="6.5" fill="#7c8086"/><rect x="260.5" y="21.5" width="4.5" height="6.5" fill="#7c8086"/><rect x="266.5" y="21.5" width="4.5" height="6.5" fill="#7c8086"/>
  <rect x="253" y="43" width="18" height="11.5" fill="#3a3c40"/><rect x="254.5" y="44.5" width="4.5" height="8.5" fill="#7c8086"/><rect x="260.5" y="44.5" width="4.5" height="8.5" fill="#7c8086"/><rect x="266.5" y="44.5" width="4.5" height="8.5" fill="#7c8086"/>
  <rect x="253" y="63" width="18" height="11" fill="#3a3c40"/><rect x="254.5" y="64.5" width="4.5" height="8" fill="#7c8086"/><rect x="260.5" y="64.5" width="4.5" height="8" fill="#7c8086"/><rect x="266.5" y="64.5" width="4.5" height="8" fill="#7c8086"/>
  <rect x="253" y="88" width="18" height="11" fill="#3a3c40"/><rect x="254.5" y="89.5" width="4.5" height="8" fill="#7c8086"/><rect x="260.5" y="89.5" width="4.5" height="8" fill="#7c8086"/><rect x="266.5" y="89.5" width="4.5" height="8" fill="#7c8086"/>
  <rect x="253" y="108" width="18" height="11" fill="#3a3c40"/><rect x="254.5" y="109.5" width="4.5" height="8" fill="#7c8086"/><rect x="260.5" y="109.5" width="4.5" height="8" fill="#7c8086"/><rect x="266.5" y="109.5" width="4.5" height="8" fill="#7c8086"/>
  <rect x="253" y="126" width="18" height="12" fill="#3a3c40"/><rect x="254.5" y="127.5" width="4.5" height="9" fill="#7c8086"/><rect x="260.5" y="127.5" width="4.5" height="9" fill="#7c8086"/><rect x="266.5" y="127.5" width="4.5" height="9" fill="#7c8086"/>

  <!-- stairs -->
  <path d="M50,82 H214 L266,143 H4 Z" fill="#e6e9ec"/>
  <g stroke="#8a8e94" stroke-width="1">
    <path d="M52,84.5 H212 M49,88 H215 M46,91.5 H218 M43,95 H221 M40,98.5 H224 M37,102 H227 M34,105.5 H230 M31,109 H233 M28,112.5 H236 M25,116 H239 M22,119.5 H242 M19,123 H245 M16,126.5 H248 M13,130 H251 M10,133.5 H254 M7,137 H257 M5,140.5 H260"/>
  </g>
  <g stroke="#4e5258" stroke-width="1.2">
    <path d="M96,84.5 H160 M96,88 H162 M98,91.5 H160 M97,95 H162 M95,98.5 H160 M97,102 H161 M98,105.5 H160 M96,109 H162 M95,112.5 H158 M97,116 H160 M98,119.5 H162 M96,123 H160 M95,126.5 H161 M97,130 H160 M98,133.5 H162 M96,137 H160"/>
  </g>
  <g fill="#f4f6f8" opacity="0.55">
    <path d="M20,143 C40,120 60,100 72,86 L80,86 C78,110 76,125 70,143 Z"/>
    <path d="M244,143 C224,120 204,100 192,86 L184,86 C186,110 188,125 194,143 Z"/>
  </g>
  <g fill="#f6f8fa" opacity="0.85">
    <path d="M84,84 C90,100 86,120 92,143 H84 C80,120 80,100 84,84 Z"/>
    <path d="M160,84 C156,100 162,120 166,143 H174 C170,120 166,100 166,84 Z"/>
  </g>
  <!-- left parapet -->
  <path d="M3,119 L27,97 L44,80.5 L54.7,70 L62,78 L3,137 Z" fill="#ab9478"/>
  <path d="M3,113.5 L27,91.5 L27,97 L3,119 Z M28,92 L44,75.5 L44,80.5 L28,97 Z M45,75.5 L54.7,65 L54.7,70 L45,80.5 Z" fill="#f0f0f0"/>
  <path d="M27,91.5 L29,92 L32,112 L30,113 Z M44,75.5 L46,75.5 L49,93 L47,94 Z" fill="#c8b8a4"/>
  <!-- right parapet -->
  <path d="M261,119 L237,97 L220,80.5 L209.3,70 L202,78 L261,137 Z" fill="#ab9478"/>
  <path d="M261,113.5 L237,91.5 L237,97 L261,119 Z M236,92 L220,75.5 L220,80.5 L236,97 Z M219,75.5 L209.3,65 L209.3,70 L219,80.5 Z" fill="#f0f0f0"/>
  <!-- snow ground -->
  <rect x="0" y="142" width="271" height="36" fill="url(#snow)"/>
  </g></g>
</svg>

<!-- ===== right pane ===== -->
<div class="a" style="left:737px;top:137px;width:12px;height:380px;background:#fafafb"></div><div class="a" style="left:738px;top:136.5px;width:10px;height:0.8px;background:#ddd"></div>
<div class="a" style="left:739.4px;top:433.7px;width:6.2px;height:37px;border-radius:3px;background:#e3e6ec"></div>
<svg style="left:0;top:0" width="926" height="520">
  <path d="M740.6,476 h3.8 l-1.9,2.2z" fill="#999"/>
  <path d="M741,485 l1.5,-1.5 l1.5,1.5 M741,488 l1.5,-1.5 l1.5,1.5" fill="none" stroke="#999" stroke-width="0.6"/>
  <path d="M741,496 l1.5,1.5 l1.5,-1.5 M741,499 l1.5,1.5 l1.5,-1.5" fill="none" stroke="#999" stroke-width="0.6"/>
  <path d="M731.5,507 v3.5 l2,-1.75z" fill="#999"/>
  <path d="M155.5,508.5 l2,-1.8 v3.6z" fill="#999"/>
  
  <path d="M741,144.5 h2.4 l-1.2,-1.4z" fill="#999"/>
  <!-- pane header icons -->
  <path d="M874.5,148 h7 l-1.2,-1.5 v-3 a2.3,2.3 0 0 0 -4.6,0 v3z" fill="none" stroke="#555" stroke-width="0.8"/>
  <path d="M890,142 L896,148 M896,142 L890,148" stroke="#555" stroke-width="0.9"/>
  <!-- fill icon -->
  <path d="M757.5,161 L762.5,156 L767.5,161 L762.5,166 Z M759,159.5 L761,155.5 H764" fill="none" stroke="#444" stroke-width="0.8"/>
  <path d="M767.2,162 v4.5" stroke="#7aa8e0" stroke-width="0.8"/>
  <rect x="752" y="182" width="19.5" height="1.3" fill="#d89870"/>
  <line x1="752" y1="183.6" x2="900" y2="183.6" stroke="#f2f2f2" stroke-width="0.6"/>
  <path d="M753,202 l3,-3 v3z" fill="#e0783c"/>
  <rect x="826.5" y="193" width="66" height="14" fill="none" stroke="#f0f0f0" stroke-width="0.7"/>
  <path d="M884,199.5 h3 l-1.5,1.7z" fill="#888"/>
  <!-- radios -->
  <circle cx="762.5" cy="219.1" r="3.3" fill="#fff" stroke="#888" stroke-width="0.6"/>
  <circle cx="762.5" cy="219.1" r="1.6" fill="#222"/>
  <circle cx="762.5" cy="233" r="3.3" fill="#fff" stroke="#aaa" stroke-width="0.6"/>
  <circle cx="762.5" cy="246.7" r="3.3" fill="#fff" stroke="#aaa" stroke-width="0.6"/>
  <circle cx="762.5" cy="260.3" r="3.3" fill="#fff" stroke="#aaa" stroke-width="0.6"/>
  <rect x="759.3" y="270.8" width="6.4" height="6.4" fill="#fff" stroke="#aaa" stroke-width="0.6"/>
  <rect x="840" y="295" width="50" height="13" fill="none" stroke="#f0f0f0" stroke-width="0.7"/>
  <path d="M886,301.5 h1.6 l-0.8,0.9z" fill="#888"/>
  <circle cx="830" cy="320.6" r="4.4" fill="#fff" stroke="#999" stroke-width="0.6"/>
  <path d="M828,320.6 h4" stroke="#666" stroke-width="0.6"/>
  <circle cx="886.5" cy="320.6" r="4.4" fill="#fff" stroke="#999" stroke-width="0.6"/>
  <path d="M884.5,320.6 h4 M886.5,318.6 v4" stroke="#666" stroke-width="0.6"/>
  <line x1="837" y1="320.6" x2="880" y2="320.6" stroke="#ddd" stroke-width="0.8"/>
  <path d="M834.8,323.5 l2.2,-3.5 l2.2,3.5z" fill="#e87a3a"/>
  <!-- right toolbar -->
  <line x1="905" y1="144" x2="922" y2="144" stroke="#eee" stroke-width="0.8"/>
  <g fill="none" stroke="#555" stroke-width="0.8">
    <path d="M908.5,165 C910,159 915,156.5 918,157 C918.5,160 916,165 910,166.5 Z M911,160 a1,1 0 1 0 0.1,0"/>
  </g>
  <rect x="904" y="173.5" width="19" height="19" fill="#e6ebf3"/>
  <g fill="none" stroke="#444" stroke-width="0.8">
    <path d="M908,180 H918 M908,186 H918"/><circle cx="909.5" cy="180" r="1.3" fill="#e6ebf3"/><circle cx="916.5" cy="186" r="1.3" fill="#e6ebf3"/>
  </g>
  <g fill="none" stroke="#555" stroke-width="0.8">
    <path d="M913,198 L914.5,201.5 L918.5,202 L915.5,204.5 L916.5,208.5 L913,206.5 L909.5,208.5 L910.5,204.5 L907.5,202 L911.5,201.5 Z"/>
    <path d="M908.5,222 H917.5 V229 H908.5 Z M911,225 l2,2 l-2,2"/>
    <circle cx="913" cy="247.5" r="4.3"/><path d="M911.5,246 a1.5,1.5 0 1 1 1.5,1.8 v0.8"/>
    <path d="M908.5,264 H917 V272 H908.5 Z M908.5,268 H917"/>
    <circle cx="913" cy="289.5" r="4.3"/><path d="M911.5,287 L914,289.5 L912,292"/>
  </g>
</svg>
<div class="t" style="left:751px;top:142.5px;font-size:7px;color:#444">对象属性·</div>
<div class="t" style="left:755px;top:171.5px;font-size:7px;color:#e0783c">填充</div>
<div class="t" style="left:758px;top:197px;font-size:7px;color:#e0783c">填充</div>
<div class="t" style="left:769px;top:215.6px;font-size:7px;color:#333">纯色填充(<u>S</u>)</div>
<div class="t" style="left:769px;top:229.5px;font-size:7px;color:#333">渐变填充(<u>G</u>)</div>
<div class="t" style="left:769px;top:243.2px;font-size:7px;color:#333">图片或纹理填充(<u>P</u>)</div>
<div class="t" style="left:769px;top:256.8px;font-size:7px;color:#333">图案填充(<u>A</u>)</div>
<div class="t" style="left:769px;top:270.5px;font-size:7px;color:#333">隐藏背景图形(<u>H</u>)</div>
<div class="t" style="left:758px;top:298.2px;font-size:7px;color:#333">颜色(C)</div>
<div class="t" style="left:758px;top:317px;font-size:7px;color:#333">透明度(T)</div>
<div class="t" style="left:836px;top:312.5px;font-size:6px;color:#555">0%</div>

<!-- ===== notes / status bar (beneath overlay) ===== -->
<div class="a" style="left:162.5px;top:505.7px;width:556px;height:5.9px;border-radius:3px;background:#e3e6ec"></div>
<div class="a" style="left:20px;top:530px;width:906px;height:18px;background:#f4f5f7"></div>
<svg style="left:0;top:0" width="926" height="550">
  <path d="M155,518 H165 M155,521 H165 M155,524 H162 M163.5,523 v2.5" stroke="#444" stroke-width="0.9" fill="none"/>
  <g fill="none" stroke="#333" stroke-width="0.8">
    <path d="M541,535 l3.5,-2 l3.5,2 v4 l-3.5,2 l-3.5,-2z"/>
    <path d="M586,539 l1.5,-2 l1.5,2z" fill="#333"/>
    <path d="M602,533.5 h9 M602,537 h9 M602,540.5 h9 M605,531.5 l1.5,1.5 l1.5,-1.5"/>
    <path d="M637.5,532 v8 h8 v-5 M643,530 v4 M641,532 h4"/>
    <rect x="676" y="533" width="8" height="8"/><path d="M679,533 v8 M679,536 h5"/>
    <rect x="692" y="533" width="3.3" height="3.3"/><rect x="696.7" y="533" width="3.3" height="3.3"/><rect x="692" y="537.7" width="3.3" height="3.3"/><rect x="696.7" y="537.7" width="3.3" height="3.3"/>
    <path d="M707,533 h4 v8 h-4z M711,533 h4 v8 h-4z"/>
    <path d="M766,533 h-1 v2 M774,533 h1 v2 M766,542 h-1 v-2 M774,542 h1 v-2"/><rect x="767.5" y="535" width="5" height="5"/>
    <path d="M811,538.5 h5" stroke-width="1.1"/>
    <path d="M910,538.5 h6 M913,535.5 v6" stroke-width="1"/>
  </g>
  <rect x="728" y="531.5" width="18" height="15.5" fill="#5a6680"/>
  <path d="M734,535 l6.5,4.2 l-6.5,4.2z" fill="#fff"/>
  <line x1="822" y1="538.5" x2="862" y2="538.5" stroke="#333" stroke-width="0.9"/>
  <line x1="862" y1="538.5" x2="905" y2="538.5" stroke="#999" stroke-width="0.6"/>
  <circle cx="862" cy="538.5" r="3" fill="#f4f5f7" stroke="#333" stroke-width="0.8"/>
  <circle cx="909" cy="517.5" r="0.9" fill="none" stroke="#444" stroke-width="0.6"/>
  <circle cx="912.5" cy="517.5" r="0.9" fill="none" stroke="#444" stroke-width="0.6"/>
  <circle cx="916" cy="517.5" r="0.9" fill="none" stroke="#444" stroke-width="0.6"/>
</svg>
<div class="t" style="left:168px;top:517.8px;font-size:7.6px;color:#333">单击此处添加备注</div>
<div class="t" style="left:755px;top:513px;font-size:7px;color:#333">全部应用</div>
<div class="t" style="left:793px;top:513px;font-size:7px;color:#aaa">重置背景</div>
<div class="t" style="left:27px;top:535px;font-size:7px;color:#333">幻灯片 8 / 8&nbsp;&nbsp;&nbsp;&nbsp;&nbsp;&nbsp;&nbsp;&nbsp;&nbsp;&nbsp;&nbsp;第一PPT，www.1ppt.com</div>
<div class="t" style="left:551px;top:536px;font-size:7px;color:#333">智能美化</div>
<div class="t" style="left:612px;top:536px;font-size:7px;color:#333">备注·</div>
<div class="t" style="left:648px;top:536px;font-size:7px;color:#333">批注</div>
<div class="t" style="left:749px;top:535px;font-size:7px;color:#333">·</div>
<div class="t" style="left:779px;top:536px;font-size:7px;color:#333">100% ·</div>

<!-- ===== meeting overlays ===== -->
<div class="a" style="left:0;top:516.6px;width:946px;height:31px;background:rgba(30,30,30,0.66)"></div>
<div class="a" style="left:911.5px;top:248.4px;width:35px;height:113px;border-radius:12px 0 0 12px;background:rgba(43,43,43,0.7)"></div>
<svg style="left:0;top:0" width="960" height="571">
  <path d="M927.3,297 L937.2,305.5 L927.3,314 Z" fill="#fff"/>
</svg>
<div class="a" style="left:-20px;top:90px;width:84px;height:80px;border-radius:0 40px 40px 0;background:rgba(245,245,245,0.88);box-shadow:0 0 0 0.9px rgba(0,0,0,0.16)"></div>
<svg style="left:0;top:0" width="80" height="180">
  <defs><clipPath id="mc"><path d="M0,0 H80 V180 H0 Z M17.6,116.2 L39.2,137.2 L42.9,133.3 L21.3,112.3 Z" clip-rule="evenodd"/></clipPath></defs>
  <g clip-path="url(#mc)">
    <rect x="24.1" y="112.3" width="10.1" height="17" rx="5.05" fill="#1fb95a"/>
    <path d="M21.1,121.8 V123.6 a8.2,8.2 0 0 0 16.4,0 V121.8" fill="none" stroke="#1fb95a" stroke-width="1.7"/>
    <path d="M29.3,131.5 V137" stroke="#1fb95a" stroke-width="1.8"/>
  </g>
  <path d="M20,114.8 L40.5,134.7" stroke="#1fb95a" stroke-width="1.8"/>
</svg>
<svg style="left:0;top:0" width="200" height="550">
  <defs><clipPath id="mic2"><rect x="14" y="530" width="12" height="8"/></clipPath></defs>
  <rect x="15" y="522.6" width="8.8" height="13.5" rx="4.4" fill="#fff"/>
  <rect x="15" y="522.6" width="8.8" height="13.5" rx="4.4" fill="#3fcf5a" clip-path="url(#mic2)"/>
  <path d="M11.2,531 a8.2,8.2 0 0 0 16.4,0" fill="none" stroke="#fff" stroke-width="1.8"/>
  <path d="M19.4,539.5 V543" stroke="#fff" stroke-width="1.8"/>
</svg>
<div class="t" style="left:33.5px;top:525px;font-size:16px;color:#fff;letter-spacing:0.15px;text-shadow:0 0 2px rgba(0,0,0,0.4)">信息化张飞的屏幕共享</div>
<!-- ===== participants panel ===== -->
<div class="a" style="left:970px;top:62px;width:299px;height:486px;background:#000"></div>
<div class="tile" style="left:970px;top:62px;height:160.5px"></div>
<div class="tile" style="left:970px;top:225px;height:160px"></div>
<div class="tile" style="left:970px;top:388px;height:159.5px"></div>
<!-- tile 1 avatar -->
<svg style="left:1090px;top:104px" width="60" height="60">
  <defs><clipPath id="av1"><circle cx="30.2" cy="29.5" r="29.2"/></clipPath>
  <linearGradient id="avg1" x1="0" y1="0" x2="0" y2="1"><stop offset="0" stop-color="#f2f5f7"/><stop offset="1" stop-color="#dfe6ea"/></linearGradient></defs>
  <g clip-path="url(#av1)">
    <rect width="60" height="60" fill="url(#avg1)"/>
    <path d="M0,35.5 L18.5,23.2 L26.6,30.1 L40.5,16.8 L60,31 V60 H0 Z" fill="#d8e0e5"/>
    <circle cx="15" cy="11.6" r="4.6" fill="#d6dde2"/>
    <text x="30" y="49" font-size="5.4" fill="#6e7a84" text-anchor="middle">暂时无法查看</text>
  </g>
</svg>
<svg style="left:0;top:0" width="1269" height="571">
  <rect x="984.5" y="196.7" width="8.7" height="14.3" rx="4.35" fill="#fff"/>
  <path d="M980.25,206.2 a8.6,8.6 0 0 0 17.2,0" fill="none" stroke="#fff" stroke-width="1.7"/>
  <path d="M988.85,214.0 V216.7" stroke="#fff" stroke-width="1.7"/>
  <path d="M980.3,214.6 L997.2,199.1" stroke="#2b2e31" stroke-width="3.6"/>
  <path d="M980.3,214.6 L997.2,199.1" stroke="#e0625a" stroke-width="2.1"/>
</svg>
<svg style="left:0;top:0" width="1269" height="571">
  <rect x="1108.8" y="208.8" width="3.8" height="7" fill="#e43d30"/>
  <rect x="1114.2" y="205" width="3.8" height="10.8" fill="#dcdcdc"/>
  <rect x="1119.6" y="201" width="3.8" height="14.8" fill="#dcdcdc"/>
</svg>
<div class="t" style="left:1004px;top:200px;font-size:16px;color:#f2f2f2">软201吴锦玲</div>
<!-- tile 2 avatar -->
<svg style="left:1090px;top:268px" width="60" height="60">
  <defs><clipPath id="av2"><circle cx="30" cy="29.3" r="29"/></clipPath></defs>
  <g clip-path="url(#av2)">
    <rect width="60" height="60" fill="#151515"/>
    <path d="M3,17 L15,2 L38,1 L38,43 L7,46 L3,32 Z" fill="#e6ddc8"/>
    <path d="M39,1 L51,4 L58,17 L58,37 L55,45 L39,39 Z" fill="#ece4d2"/>
    <line x1="38.8" y1="1" x2="38.8" y2="42" stroke="#5a5650" stroke-width="1.1"/>
    <path d="M11,19 C9,14 11,10 15,8 C14,12 14,16 16,19 Z" fill="#f0ece4" stroke="#333" stroke-width="0.5"/>
    <path d="M27,8.5 C31,10 34,14 33,19 L30,19 C30,15 29,11 27,8.5 Z" fill="#f0ece4" stroke="#333" stroke-width="0.5"/>
    <ellipse cx="23" cy="26" rx="14.5" ry="10.5" fill="#4a5260"/>
    <ellipse cx="25" cy="42" rx="10" ry="8" fill="#4a5260"/>
    <path d="M18,36 L32,35 L28,44 Z" fill="#b8302a"/>
    <text x="48" y="32" font-size="10.5" fill="#c83a34" text-anchor="middle">唉</text>
  </g>
</svg>
<svg style="left:0;top:0" width="1269" height="571">
  <defs><clipPath id="gclip"><rect x="983.6" y="369.29999999999995" width="11" height="6"/></clipPath></defs>
  <rect x="984.6" y="359.4" width="8.7" height="14.6" rx="4.35" fill="#fff"/>
  <rect x="984.6" y="359.4" width="8.7" height="14.6" rx="4.35" fill="#33d04a" clip-path="url(#gclip)"/>
  <path d="M980.35,369.4 a8.6,8.6 0 0 0 17.2,0" fill="none" stroke="#fff" stroke-width="1.7"/>
  <path d="M988.95,377.2 V379.9" stroke="#fff" stroke-width="1.7"/>
</svg>
<div class="t" style="left:1004px;top:362.8px;font-size:16px;color:#f2f2f2">信息化张飞</div>
<!-- tile 3 avatar -->
<svg style="left:1090px;top:430px" width="60" height="60">
  <defs><clipPath id="av3"><circle cx="30" cy="29.3" r="29"/></clipPath>
  <linearGradient id="sky" x1="0" y1="0" x2="0" y2="1"><stop offset="0" stop-color="#8090d0"/><stop offset="0.25" stop-color="#d6d4ee"/><stop offset="0.45" stop-color="#b8b0d8"/><stop offset="0.62" stop-color="#d8b898"/><stop offset="0.78" stop-color="#9ca4c0"/><stop offset="1" stop-color="#e8ecf4"/></linearGradient>
  <radialGradient id="glow" cx="0.8" cy="0.6" r="0.35"><stop offset="0" stop-color="#ffe0a0" stop-opacity="0.9"/><stop offset="1" stop-color="#ffe0a0" stop-opacity="0"/></radialGradient>
  <filter id="avb"><feGaussianBlur stdDeviation="0.6"/></filter></defs>
  <g clip-path="url(#av3)"><g filter="url(#avb)">
    <rect width="60" height="60" fill="url(#sky)"/>
    <path d="M0,8 C15,4 30,14 60,4 V16 C40,22 20,12 0,22 Z" fill="#eeeefa" opacity="0.7"/>
    <rect width="60" height="60" fill="url(#glow)"/>
    <path d="M0,25 C12,22 20,23 28,25" stroke="#e87090" stroke-width="1" fill="none"/>
    <path d="M0,44 C20,42 40,46 60,44 V52 H0 Z" fill="#f0f0f6" opacity="0.6"/>
    <circle cx="35.5" cy="14" r="5.2" fill="#5a3a2c"/>
    <path d="M26,20 C30,18 38,19 40,22 L54,28 L54,32 L40,31 L40,44 H24 L25,24 Z" fill="#28284a"/>
    <circle cx="55" cy="30" r="1.6" fill="#d8b0a0"/>
    <rect x="26" y="44" width="12" height="16" fill="#b8a8b8"/>
  </g></g>
</svg>
<div class="a" style="left:970px;top:516px;width:32px;height:31.5px;background:#fa8a1e"></div>
<svg style="left:970px;top:516px" width="32" height="32">
  <circle cx="16" cy="11" r="4.6" fill="#fff"/>
  <path d="M6.5,26 C7,19.5 11,17.5 16,17.5 C21,17.5 25,19.5 25.5,26 Z" fill="#fff"/>
</svg>
<svg style="left:0;top:0" width="1269" height="571">
  <rect x="1016.8" y="521.8" width="8.7" height="14.3" rx="4.35" fill="#fff"/>
  <path d="M1012.55,531.3 a8.6,8.6 0 0 0 17.2,0" fill="none" stroke="#fff" stroke-width="1.7"/>
  <path d="M1021.15,539.0999999999999 V541.8" stroke="#fff" stroke-width="1.7"/>
  <path d="M1012.5999999999999,539.6999999999999 L1029.5,524.1999999999999" stroke="#2b2e31" stroke-width="3.6"/>
  <path d="M1012.5999999999999,539.6999999999999 L1029.5,524.1999999999999" stroke="#e0625a" stroke-width="2.1"/>
</svg>
<div class="t" style="left:1035px;top:524.5px;font-size:16px;color:#f2f2f2">靳宁宁</div>
<!-- phone bottom -->
<div class="a" style="left:0;top:547.5px;width:1269px;height:24px;background:#f5f5f5"></div>
<div class="a" style="left:529px;top:557px;width:210px;height:5px;border-radius:2.5px;background:#222"></div>

</body></html>
